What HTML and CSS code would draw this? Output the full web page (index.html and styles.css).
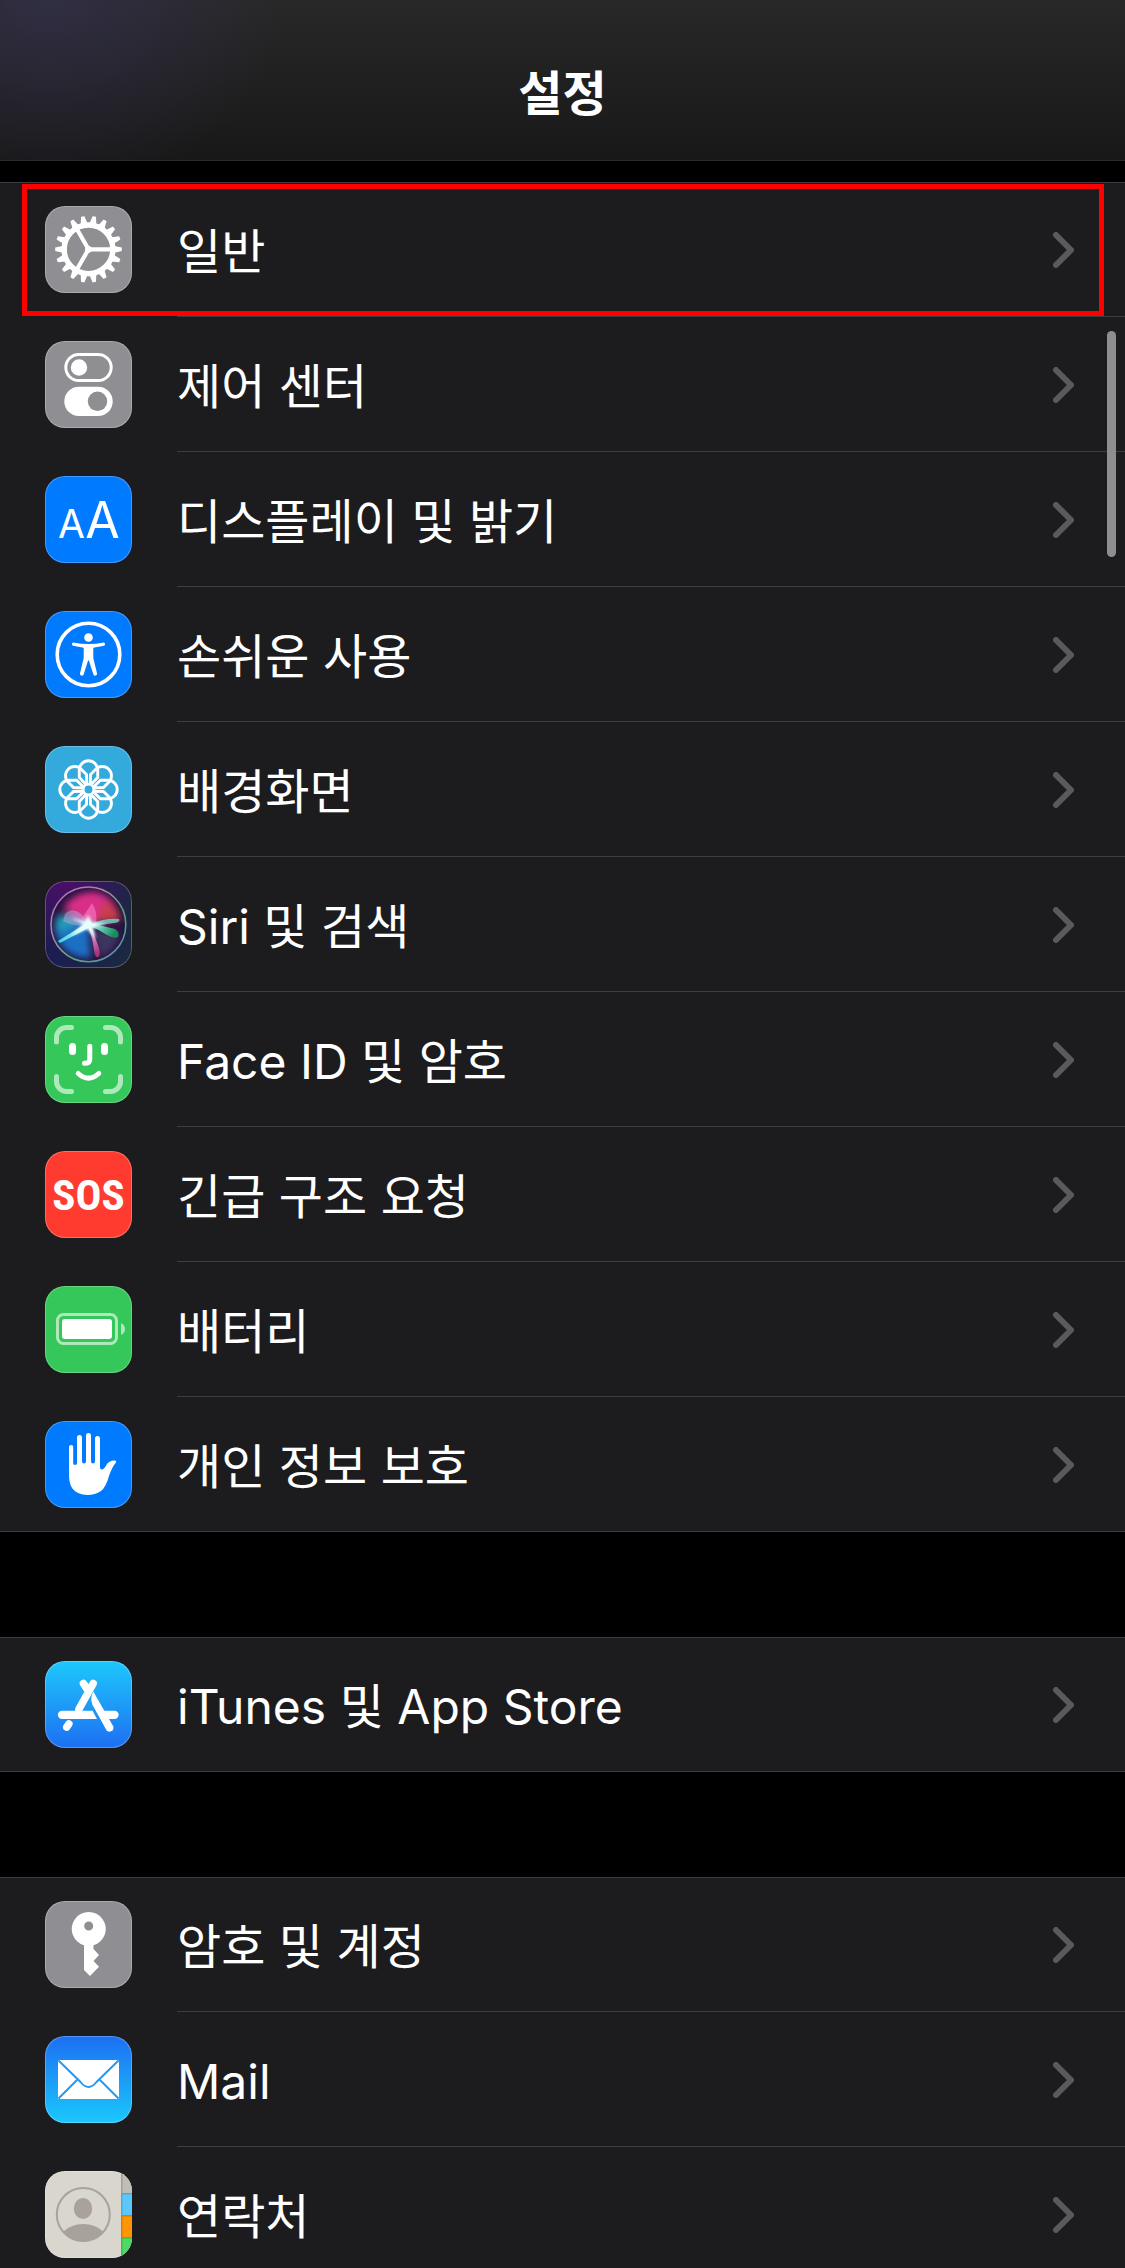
FILE: index.html
```html
<!DOCTYPE html>
<html lang="ko">
<head>
<meta charset="utf-8">
<meta name="viewport" content="width=device-width, initial-scale=1">
<title>설정</title>
<link rel="stylesheet" href="styles.css">
</head>
<body>
<header class="navbar"><h1 class="title">설정</h1></header>
<main class="content">
  <ul class="group">
    <li class="item">
      <a class="row selected" href="#general">
        <svg class="icon gray" viewBox="0 0 87 87" aria-hidden="true">
          <defs><path id="teeth" d="M-3.4-26L-1.7-33.3H1.7L3.4-26ZM-3.4 26L-1.7 33.3H1.7L3.4 26Z"/></defs>
          <g transform="translate(43.5 43.3)" fill="#fff">
            <use href="#teeth" transform="rotate(10)"/><use href="#teeth" transform="rotate(30)"/><use href="#teeth" transform="rotate(50)"/>
            <use href="#teeth" transform="rotate(70)"/><use href="#teeth" transform="rotate(90)"/><use href="#teeth" transform="rotate(110)"/>
            <use href="#teeth" transform="rotate(130)"/><use href="#teeth" transform="rotate(150)"/><use href="#teeth" transform="rotate(170)"/>
            <circle r="24.3" fill="none" stroke="#fff" stroke-width="5.4"/>
            <path d="M0 0H23M0 0L-11.5-20M0 0L-11.5 20" stroke="#fff" stroke-width="4.2"/>
            <circle r="3.4"/>
          </g>
        </svg>
        <span class="label">일반</span>
        <svg class="chevron" viewBox="0 0 21 36" aria-hidden="true"><path d="M3 3L18 18L3 33"/></svg>
      </a>
    </li>
    <li class="item">
      <a class="row" href="#control-center">
        <svg class="icon gray" viewBox="0 0 87 87" aria-hidden="true">
          <rect x="20.8" y="13.5" width="45.4" height="26" rx="13" fill="none" stroke="#fff" stroke-width="3"/>
          <circle cx="34" cy="26.5" r="8.2" fill="#fff"/>
          <rect x="19.3" y="45.7" width="48.4" height="29.3" rx="14.6" fill="#fff"/>
          <circle cx="52.5" cy="60.3" r="9.7" fill="#8e8e93"/>
        </svg>
        <span class="label">제어 센터</span>
        <svg class="chevron" viewBox="0 0 21 36" aria-hidden="true"><path d="M3 3L18 18L3 33"/></svg>
      </a>
    </li>
    <li class="item">
      <a class="row" href="#display">
        <svg class="icon blue" viewBox="0 0 87 87" aria-hidden="true">
          <text class="glyph-text" x="26.5" y="62" font-size="39">A</text>
          <text class="glyph-text" x="57.5" y="62" font-size="50">A</text>
        </svg>
        <span class="label">디스플레이 및 밝기</span>
        <svg class="chevron" viewBox="0 0 21 36" aria-hidden="true"><path d="M3 3L18 18L3 33"/></svg>
      </a>
    </li>
    <li class="item">
      <a class="row" href="#accessibility">
        <svg class="icon blue" viewBox="0 0 87 87" aria-hidden="true">
          <circle cx="43.5" cy="43.5" r="31.3" fill="none" stroke="#fff" stroke-width="3.6"/>
          <circle cx="43.5" cy="26.5" r="4.3" fill="#fff"/>
          <path d="M28.3 31.4Q43.5 34.4 58.7 31.4A1.8 1.8 0 0 1 59 34.8L48.3 36.7V47L52 62.2A1.9 1.9 0 0 1 48.3 63.3L43.9 49.5H43.1L38.7 63.3A1.9 1.9 0 0 1 35 62.2L38.7 47V36.7L28 34.8A1.8 1.8 0 0 1 28.3 31.4Z" fill="#fff"/>
        </svg>
        <span class="label">손쉬운 사용</span>
        <svg class="chevron" viewBox="0 0 21 36" aria-hidden="true"><path d="M3 3L18 18L3 33"/></svg>
      </a>
    </li>
    <li class="item">
      <a class="row" href="#wallpaper">
        <svg class="icon sky" viewBox="0 0 87 87" aria-hidden="true">
          <defs><path id="petal" d="M-2-4.5L-9.2-12V-19.5A9.2 9.2 0 0 1 9.2-19.5V-12L2-4.5"/></defs>
          <g transform="translate(43.5 43.5)" fill="none" stroke="#fff" stroke-width="2.9">
            <use href="#petal"/><use href="#petal" transform="rotate(45)"/><use href="#petal" transform="rotate(90)"/><use href="#petal" transform="rotate(135)"/>
            <use href="#petal" transform="rotate(180)"/><use href="#petal" transform="rotate(225)"/><use href="#petal" transform="rotate(270)"/><use href="#petal" transform="rotate(315)"/>
            <circle r="5.4"/>
          </g>
        </svg>
        <span class="label">배경화면</span>
        <svg class="chevron" viewBox="0 0 21 36" aria-hidden="true"><path d="M3 3L18 18L3 33"/></svg>
      </a>
    </li>
    <li class="item">
      <a class="row" href="#siri">
        <svg class="icon siri" viewBox="0 0 87 87" aria-hidden="true">
          <defs>
            <clipPath id="orb"><circle cx="43.4" cy="43.4" r="37"/></clipPath>
            <filter id="soft" x="-50%" y="-50%" width="200%" height="200%"><feGaussianBlur stdDeviation="3.5"/></filter>
            <filter id="glow" x="-50%" y="-50%" width="200%" height="200%"><feGaussianBlur stdDeviation="1.8"/></filter>
            <linearGradient id="ring" x1="0" y1="0" x2="1" y2="1"><stop offset="0" stop-color="#b565c4"/><stop offset=".35" stop-color="#a2899f"/><stop offset=".65" stop-color="#58a47b"/><stop offset="1" stop-color="#6a7fc0"/></linearGradient>
            <linearGradient id="rightRay" x1="0" y1="0" x2="1" y2=".4"><stop offset="0" stop-color="#e9ffff"/><stop offset=".5" stop-color="#67e6c0"/><stop offset="1" stop-color="#159b62"/></linearGradient>
            <linearGradient id="downRay" x1="0" y1="0" x2=".2" y2="1"><stop offset="0" stop-color="#fff"/><stop offset=".5" stop-color="#e888c8"/><stop offset="1" stop-color="#b8357f"/></linearGradient>
            <linearGradient id="leftRay" x1="1" y1="0" x2="0" y2="1"><stop offset="0" stop-color="#fff"/><stop offset="1" stop-color="#37d3df"/></linearGradient>
          </defs>
          <g clip-path="url(#orb)">
            <rect width="87" height="87" fill="#24123f"/>
            <g filter="url(#soft)">
              <path d="M18 27Q30 10 50 11Q71 15 75 39L43 43Z" fill="#d92d88"/>
              <path d="M60 19Q74 27 76 40L50 40Z" fill="#c83d4c"/>
              <path d="M9 44Q18 26 43 42L46 77Q14 78 9 44Z" fill="#1a70c4"/>
              <path d="M11 36Q20 30 34 42L12 52Z" fill="#259cb5"/>
              <path d="M47 47L75 52Q70 72 54 76Z" fill="#3c3560"/>
            </g>
            <path d="M20 33Q30 23 42 40L52 44Q30 47 18 40Z" fill="#d4b7ed" opacity=".4"/>
            <path d="M36 38Q42 30 47 22Q53 31 51 43Z" fill="#ff8cd0" opacity=".5"/>
            <path d="M45 43Q60 37 74 38Q76 41 69 42L47 45Z" fill="#70e6d4" opacity=".75"/>
            <path d="M44 42Q58 45 70 48Q75 51 73 56Q69 58 62 54Q53 48 44 45Z" fill="url(#rightRay)" opacity=".85"/>
            <path d="M45 43Q49 53 54 67Q56 75 53 76Q50 77 49 69Q47 53 42 44Z" fill="url(#downRay)" opacity=".9"/>
            <path d="M45 40L13 60Q14 63 17 61L47 45Z" fill="url(#leftRay)"/>
            <path d="M43 34L47 41L62 43L48 46L51 58L42 48L26 55L38 43L26 37L40 40Z" fill="#e8ffff" filter="url(#glow)"/>
          </g>
          <circle cx="43.4" cy="43.4" r="37.4" fill="none" stroke="url(#ring)" stroke-width="1.6"/>
        </svg>
        <span class="label">Siri 및 검색</span>
        <svg class="chevron" viewBox="0 0 21 36" aria-hidden="true"><path d="M3 3L18 18L3 33"/></svg>
      </a>
    </li>
    <li class="item">
      <a class="row" href="#face-id">
        <svg class="icon green" viewBox="0 0 87 87" aria-hidden="true">
          <g fill="none" stroke="#fff" stroke-width="5" stroke-linecap="round">
            <path opacity=".6" d="M11.5 26V21.5A10 10 0 0 1 21.5 11.5H26.5M60.5 11.5H65.5A10 10 0 0 1 75.5 21.5V26M75.5 60.5V65.5A10 10 0 0 1 65.5 75.5H60.5M26.5 75.5H21.5A10 10 0 0 1 11.5 65.5V60.5"/>
            <path d="M44.8 30.3V43.5Q44.8 47.3 39.5 47.3M33.2 57.5Q43.5 66.8 53.8 57.5"/>
          </g>
          <rect x="24" y="27" width="7" height="12" rx="3.5" fill="#fff"/>
          <rect x="56" y="27" width="7" height="12" rx="3.5" fill="#fff"/>
        </svg>
        <span class="label">Face ID 및 암호</span>
        <svg class="chevron" viewBox="0 0 21 36" aria-hidden="true"><path d="M3 3L18 18L3 33"/></svg>
      </a>
    </li>
    <li class="item">
      <a class="row" href="#sos">
        <svg class="icon red" viewBox="0 0 87 87" aria-hidden="true">
          <text class="sos-text" x="43.5" y="59" font-size="43">SOS</text>
        </svg>
        <span class="label">긴급 구조 요청</span>
        <svg class="chevron" viewBox="0 0 21 36" aria-hidden="true"><path d="M3 3L18 18L3 33"/></svg>
      </a>
    </li>
    <li class="item">
      <a class="row" href="#battery">
        <svg class="icon green" viewBox="0 0 87 87" aria-hidden="true">
          <rect x="12.5" y="28.5" width="59" height="29" rx="6" fill="none" stroke="#fff" stroke-opacity=".6" stroke-width="3"/>
          <rect x="17" y="33" width="50" height="20" rx="3" fill="#fff"/>
          <path d="M76 37Q80 39 80 43Q80 47 76 49Z" fill="#fff" opacity=".6"/>
        </svg>
        <span class="label">배터리</span>
        <svg class="chevron" viewBox="0 0 21 36" aria-hidden="true"><path d="M3 3L18 18L3 33"/></svg>
      </a>
    </li>
    <li class="item">
      <a class="row" href="#privacy">
        <svg class="icon blue" viewBox="0 0 87 87" aria-hidden="true">
          <path d="M24 26A2.1 2.1 0 0 1 28.2 26V42Q28.2 44 30 44Q32 44 32 42V16.5A2.5 2.5 0 0 1 37 16.5V40Q37 42.5 39 42.5Q41 42.5 41 40V14.5A2.5 2.5 0 0 1 46 14.5V40Q46 42.5 48 42.5Q50 42.5 50 40V17.5A2.5 2.5 0 0 1 55 17.5V46Q55 49 57.5 48.5Q59.5 47.5 62 43Q65 39 70 39.5Q72 40 71 41.5Q67 46 64 55Q61 66 56 70Q50 74 42.5 74Q32 74 27 67Q24 62 24 54Z" fill="#fff"/>
        </svg>
        <span class="label">개인 정보 보호</span>
        <svg class="chevron" viewBox="0 0 21 36" aria-hidden="true"><path d="M3 3L18 18L3 33"/></svg>
      </a>
    </li>
  </ul>
  <ul class="group">
    <li class="item">
      <a class="row" href="#store">
        <svg class="icon store" viewBox="0 0 87 87" aria-hidden="true">
          <path d="M38.5 22.5L42 28M48.2 22.5L34 48M23.8 63L21.8 66" stroke="#fff" stroke-width="7.6" stroke-linecap="round" fill="none"/>
          <path d="M17 49.7H47.5L52 58H17A4.1 4.1 0 0 1 17 49.7ZM56 49.7H69.5A4.1 4.1 0 0 1 69.5 58H60Z" fill="#fff"/>
          <path d="M48.3 30.5L68.3 65.5A4 4 0 0 1 61.5 69.3L47.3 43.5Q44.8 37.5 48.3 30.5Z" fill="#fff"/>
        </svg>
        <span class="label">iTunes 및 App Store</span>
        <svg class="chevron" viewBox="0 0 21 36" aria-hidden="true"><path d="M3 3L18 18L3 33"/></svg>
      </a>
    </li>
  </ul>
  <ul class="group">
    <li class="item">
      <a class="row" href="#passwords">
        <svg class="icon gray" viewBox="0 0 87 87" aria-hidden="true">
          <path fill-rule="evenodd" d="M39 44.3A17 17 0 1 1 48.5 44.3V48L54 54L48.5 60L54 65.7L45 75L39 69ZM43.7 20.5A4.5 4.5 0 1 0 43.7 29.5A4.5 4.5 0 1 0 43.7 20.5Z" fill="#fff"/>
        </svg>
        <span class="label">암호 및 계정</span>
        <svg class="chevron" viewBox="0 0 21 36" aria-hidden="true"><path d="M3 3L18 18L3 33"/></svg>
      </a>
    </li>
    <li class="item">
      <a class="row" href="#mail">
        <svg class="icon mail" viewBox="0 0 87 87" aria-hidden="true">
          <rect x="13" y="24" width="61" height="39" rx="1.5" fill="#fff"/>
          <path d="M13.5 24.5L35.5 46Q43.5 56 51.5 46L73.5 24.5M13.5 62.5L32.5 43.5M73.5 62.5L54.5 43.5" fill="none" stroke="#219af8" stroke-width="2"/>
        </svg>
        <span class="label">Mail</span>
        <svg class="chevron" viewBox="0 0 21 36" aria-hidden="true"><path d="M3 3L18 18L3 33"/></svg>
      </a>
    </li>
    <li class="item">
      <a class="row" href="#contacts">
        <svg class="icon contacts" viewBox="0 0 87 87" aria-hidden="true">
          <path d="M76 0H87V22H76Z" fill="#bfbdb5"/><path d="M76 22H87V44H76Z" fill="#5ac8fa"/><path d="M76 44H87V66H76Z" fill="#ff9500"/><path d="M76 66H87V87H76Z" fill="#4cd964"/>
          <path d="M76 0H77.5V87H76ZM76 22H87V23.5H76ZM76 44H87V45.5H76ZM76 66H87V67.5H76Z" fill="#000" opacity=".15"/>
          <circle cx="38.3" cy="43.5" r="26.5" fill="none" stroke="#a9a29b" stroke-width="2"/>
          <ellipse cx="38" cy="37.5" rx="9.2" ry="10.5" fill="#a9a29b"/>
          <path d="M18.5 60.5Q26 53 38.3 53Q50.5 53 58 60.5Q50 70.5 38.3 70.5Q26.5 70.5 18.5 60.5Z" fill="#a9a29b"/>
        </svg>
        <span class="label">연락처</span>
        <svg class="chevron" viewBox="0 0 21 36" aria-hidden="true"><path d="M3 3L18 18L3 33"/></svg>
      </a>
    </li>
  </ul>
</main>
<div class="scroll-thumb" aria-hidden="true"></div>
</body>
</html>
```
FILE: styles.css
```css
* {
  box-sizing: border-box;
}

body {
  position: relative;
  display: flex;
  flex-direction: column;
  height: 100vh;
  margin: 0;
  overflow: hidden;
  background: #000;
  color: #fff;
  font-family: Inter, "Noto Sans CJK KR", sans-serif;
  font-size: 48px;
}

.navbar {
  display: flex;
  flex: none;
  justify-content: center;
  padding: 58px 0 30px;
  border-bottom: 1px solid #2a2a2c;
  background:
    radial-gradient(ellipse 240px 190px at 50px 0, rgba(54, 50, 84, 0.6), rgba(54, 50, 84, 0)),
    linear-gradient(#282828, #181818);
}

.title {
  margin: 0;
  font-size: 48px;
  font-weight: 700;
  line-height: 72px;
}

.content {
  display: flex;
  flex: 1;
  flex-direction: column;
  gap: 105px;
  min-height: 0;
  padding-top: 21px;
  overflow: hidden;
}

.group {
  flex: none;
  margin: 0;
  padding: 0;
  list-style: none;
  background: #1c1c1e;
  box-shadow: inset 0 1px #3d3d41, inset 0 -1px #3d3d41;
}

.row {
  position: relative;
  display: flex;
  align-items: center;
  gap: 45px;
  padding: 24px 51px 24px 45px;
  color: inherit;
  text-decoration: none;
}

/* separator, inset to the start of the label */
.item:not(:last-child) .row::after {
  content: "";
  position: absolute;
  right: 0;
  bottom: 0;
  left: 177px;
  height: 1px;
  background: #3d3d41;
}

/* highlight frame */
.selected::before {
  content: "";
  position: absolute;
  inset: 2px 21px 1px 22px;
  border: 5px solid #f00;
}

.icon {
  flex: none;
  width: 87px;
  height: 87px;
  border-radius: 20px;
  box-shadow: inset 0 0 0 1px rgba(255, 255, 255, 0.25);
}

.gray { background-color: #8e8e93; }
.blue { background-color: #007aff; }
.sky { background-color: #34aadc; }
.green { background-color: #35c759; }
.red { background-color: #ff3b30; }
.contacts { background-color: #d8d6cd; }
.store { background-image: linear-gradient(#1dc8fc, #1d6ff2); }
.mail { background-image: linear-gradient(#1d6ff2, #1ac8fc); }
.siri {
  background-image:
    radial-gradient(circle at 25% 0, #4b0f67, rgba(75, 15, 103, 0) 65%),
    linear-gradient(100deg, #1c1a55, #1a2a40);
}

.glyph-text {
  fill: #fff;
  font-family: Inter, sans-serif;
  font-weight: 400;
  text-anchor: middle;
}

.sos-text {
  fill: #fff;
  font-family: "Liberation Sans Narrow", "Roboto Condensed", "Open Sans Condensed", Roboto, sans-serif;
  font-weight: 700;
  text-anchor: middle;
}

.label {
  flex: 1;
  min-width: 0;
  padding-top: 4px;
  line-height: 72px;
  white-space: nowrap;
}

.chevron {
  flex: none;
  width: 21px;
  height: 36px;
  fill: none;
  stroke: #5a5a5e;
  stroke-width: 6;
  stroke-linecap: round;
  stroke-linejoin: round;
}

.scroll-thumb {
  position: absolute;
  top: 331px;
  right: 9px;
  width: 9px;
  height: 226px;
  border-radius: 5px;
  background: #8e8e90;
}
```
